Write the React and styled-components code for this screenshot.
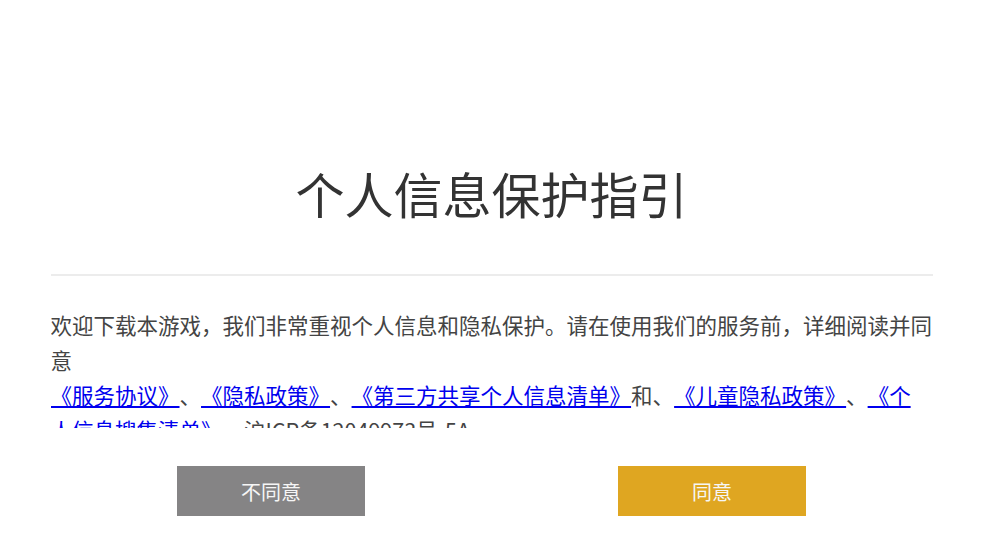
import React from "react";
import styled, { createGlobalStyle } from "styled-components";

const GlobalStyle = createGlobalStyle`
  html, body {
    margin: 0;
    padding: 0;
    background: #ffffff;
  }
  body {
    font-family: "Noto Sans CJK SC", "Noto Sans", sans-serif;
    text-spacing-trim: space-all;
  }
`;

// the last link wraps after "《个" in the original
const links = [
  { text: ["《服务协议》"], after: "、" },
  { text: ["《隐私政策》"], after: "、" },
  { text: ["《第三方共享个人信息清单》"], after: "和、" },
  { text: ["《儿童隐私政策》"], after: "、" },
  { text: ["《个", "人信息搜集清单》"], after: "、" },
];

const App = () => {
  return (
    <Wrapper>
      <GlobalStyle />
      <h1 className="title">个人信息保护指引</h1>
      <hr className="divider" />
      <div className="content">
        欢迎下载本游戏，我们非常重视个人信息和隐私保护。请在使用我们的服务前，详细阅读并同意
        <br />
        {links.map((link, i) => {
          return (
            <React.Fragment key={i}>
              <a href="#" onClick={(e) => e.preventDefault()}>
                {link.text.map((part, j) => (
                  <React.Fragment key={j}>
                    {j > 0 && <br />}
                    {part}
                  </React.Fragment>
                ))}
              </a>
              {link.after}
            </React.Fragment>
          );
        })}
        沪ICP备12049973号-5A
      </div>
      <div className="actions">
        <Button type="button" $variant="disagree">
          不同意
        </Button>
        <Button type="button" $variant="agree">
          同意
        </Button>
      </div>
    </Wrapper>
  );
};

const Button = styled.button`
  width: 188px;
  height: 50px;
  border: none;
  border-radius: 0;
  padding: 0;
  font-family: "Noto Sans CJK SC", "Noto Sans", sans-serif;
  font-size: 20px;
  color: #f6f6f6;
  cursor: pointer;
  background: ${({ $variant }) =>
    $variant === "agree" ? "#dfa621" : "#858485"};
`;

const Wrapper = styled.main`
  width: 882px;
  margin: 0 auto;
  padding-top: 163px;

  .title {
    margin: 0;
    height: 60px;
    line-height: 60px;
    text-align: center;
    font-size: 49px;
    font-weight: 400;
    color: #333333;
  }
  .divider {
    margin: 51px 0 0;
    border: none;
    height: 2px;
    background: #ececec;
  }
  .content {
    margin-top: 31px;
    height: 121px;
    overflow: hidden;
    font-size: 21.5px;
    line-height: 35px;
    color: #444444;
    word-break: break-all;
    text-spacing-trim: space-all;
    a {
      color: #0000ee;
      text-decoration: underline;
    }
  }
  .actions {
    margin-top: 38px;
    display: flex;
    justify-content: space-around;
  }
`;

export default App;
